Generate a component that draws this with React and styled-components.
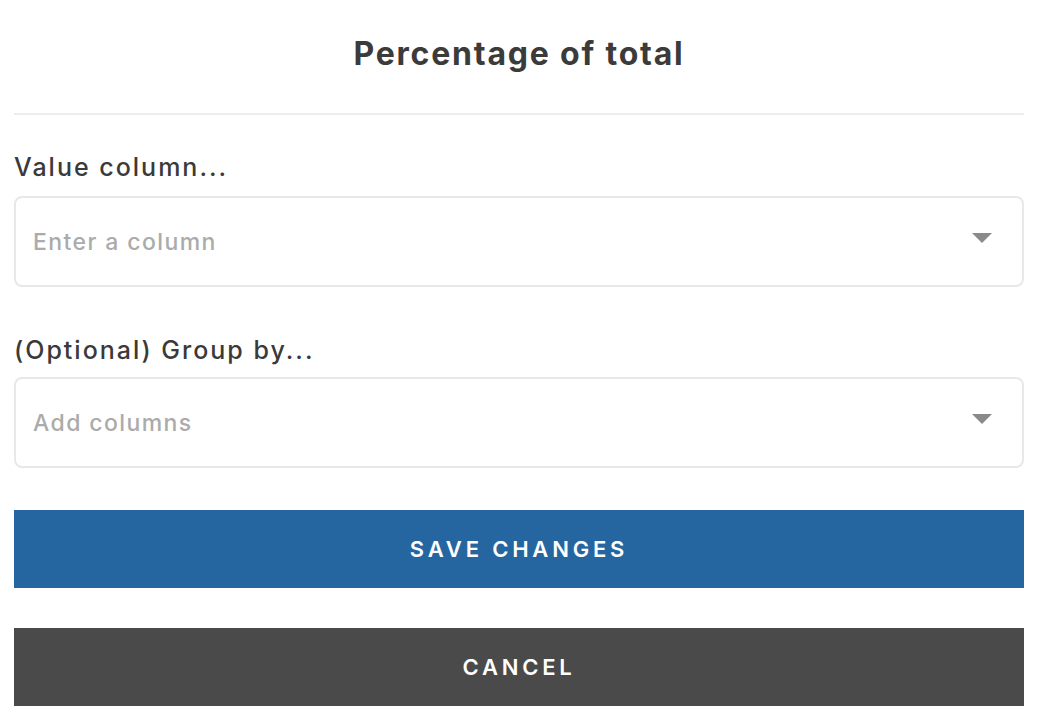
import React from "react";
import styled, { createGlobalStyle } from "styled-components";

const Global = createGlobalStyle`
  html, body { margin: 0; padding: 0; background: #fff; }
  body { font-family: "Inter", "Noto Sans", sans-serif; }
  * { box-sizing: border-box; }
`;

const Page = styled.div`
  width: 1040px;
  padding: 0 16px 0 14px;
  display: flex;
  flex-direction: column;
`;

const Header = styled.header`
  height: 115px;
  border-bottom: 2px solid #ececec;
  display: flex;
  align-items: flex-start;
  justify-content: center;
  padding-top: 33px;
`;

const Title = styled.h1`
  margin: 0;
  font-size: 32px;
  font-weight: 700;
  color: #3b3b3b;
  line-height: 42px;
  letter-spacing: 1.8px;
`;

const Field = styled.div`
  display: flex;
  flex-direction: column;
  margin-top: ${(p) => p.$top}px;
`;

const Label = styled.label`
  font-size: 25px;
  font-weight: 500;
  color: #3a3a3a;
  line-height: 32px;
  letter-spacing: 2px;
  margin-bottom: ${(p) => p.$gap}px;
`;

const Select = styled.div`
  height: 91px;
  border: 2px solid #e8e8e8;
  border-radius: 8px;
  display: flex;
  align-items: center;
  justify-content: space-between;
  padding: 0 30px 0 17px;
`;

const Placeholder = styled.span`
  font-size: 23px;
  font-weight: 500;
  color: #ababab;
  letter-spacing: 1.4px;
`;

const Caret = styled.span`
  width: 0;
  height: 0;
  border-left: 10px solid transparent;
  border-right: 10px solid transparent;
  border-top: 10px solid #8a8a8a;
  margin-top: -8px;
`;

const Button = styled.button`
  height: 78px;
  width: 100%;
  border: none;
  border-radius: 0;
  background: ${(p) => p.$bg};
  color: #fff;
  font-family: inherit;
  font-size: 22px;
  font-weight: 600;
  letter-spacing: 3.8px;
  text-transform: uppercase;
  margin-top: ${(p) => p.$top}px;
  cursor: pointer;
`;

export default function App() {
  return (
    <>
      <Global />
      <Page>
        <Header>
          <Title>Percentage of total</Title>
        </Header>
        <Field $top={36}>
          <Label $gap={13}>Value column...</Label>
          <Select>
            <Placeholder>Enter a column</Placeholder>
            <Caret />
          </Select>
        </Field>
        <Field $top={47}>
          <Label $gap={11}>(Optional) Group by...</Label>
          <Select>
            <Placeholder>Add columns</Placeholder>
            <Caret />
          </Select>
        </Field>
        <Button $bg="#2566a1" $top={42}>Save changes</Button>
        <Button $bg="#4a4a4a" $top={40}>Cancel</Button>
      </Page>
    </>
  );
}
